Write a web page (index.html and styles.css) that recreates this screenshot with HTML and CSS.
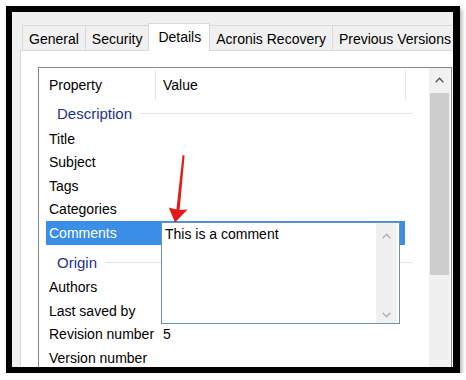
FILE: index.html
```html
<!DOCTYPE html>
<html lang="en">
<head>
  <meta charset="UTF-8" />
  <title>Properties - Details</title>
  <link rel="stylesheet" href="styles.css">
</head>
<body>
  <div class="frame">
    <div class="tabs">
      <div class="tab">General</div>
      <div class="tab">Security</div>
      <div class="tab active">Details</div>
      <div class="tab">Acronis Recovery</div>
      <div class="tab">Previous Versions</div>
    </div>
    <div class="panel">
      <div class="listview">
        <div class="lv-body">
          <div class="lv-header">
            <div class="col-prop">Property</div>
            <div class="col-value">Value</div>
          </div>
          <div class="group"><span>Description</span><i></i></div>
          <div class="row"><div class="prop">Title</div><div class="value"></div></div>
          <div class="row"><div class="prop">Subject</div><div class="value"></div></div>
          <div class="row"><div class="prop">Tags</div><div class="value"></div></div>
          <div class="row"><div class="prop">Categories</div><div class="value"></div></div>
          <div class="row selected"><div class="prop">Comments</div><div class="value"></div></div>
          <div class="group spaced"><span>Origin</span><i></i></div>
          <div class="row"><div class="prop">Authors</div><div class="value"></div></div>
          <div class="row"><div class="prop">Last saved by</div><div class="value"></div></div>
          <div class="row"><div class="prop">Revision number</div><div class="value">5</div></div>
          <div class="row"><div class="prop">Version number</div><div class="value"></div></div>
        </div>
        <div class="vscroll">
          <div class="sb-arrow">
            <svg width="9" height="6" viewBox="0 0 9 6"><path d="M0.7 5.2 L4.5 1.2 L8.3 5.2" fill="none" stroke="#555" stroke-width="1.4"/></svg>
          </div>
          <div class="thumb"></div>
        </div>
      </div>
    </div>

    <!-- in-place editor for the Comments value -->
    <div class="editor">
      <div class="editor-text">This is a comment</div>
      <div class="editor-scroll">
        <svg width="9" height="6" viewBox="0 0 9 6"><path d="M0.7 5.2 L4.5 1.2 L8.3 5.2" fill="none" stroke="#b0b0b0" stroke-width="1.3"/></svg>
        <svg width="9" height="6" viewBox="0 0 9 6"><path d="M0.7 0.8 L4.5 4.8 L8.3 0.8" fill="none" stroke="#b0b0b0" stroke-width="1.3"/></svg>
      </div>
    </div>

    <svg class="arrow" width="30" height="80" viewBox="0 0 30 80">
      <path d="M17.6 5 L19.6 5.6 L14.6 60 L22.5 59.5 L10 72.5 L3.8 57.5 L11.4 59.6 Z" fill="#e3191c"/>
    </svg>
  </div>
</body>
</html>
```

FILE: styles.css
```css
html, body {
  margin: 0;
  padding: 0;
  background: #ffffff;
  font-family: "Liberation Sans", Arial, sans-serif;
  font-size: 14px;
  color: #000;
}

.frame {
  position: relative;
  margin: 6px 0 0 6px;
  width: 441px;
  height: 355px;
  border: 6px solid #000;
  border-right-width: 7px;
  background: #f0f0f0;
  overflow: hidden;
  box-shadow: 2px 3px 4px rgba(0, 0, 0, 0.3);
}

/* tab strip */
.tabs {
  display: flex;
  align-items: flex-end;
  height: 38px;
  padding-left: 10px;
  box-sizing: border-box;
}

.tab {
  height: 25px;
  padding: 2px 6px 0;
  box-sizing: border-box;
  display: flex;
  align-items: center;
  border: 1px solid #d9d9d9;
  border-bottom: none;
  margin-right: -1px;
  background: #f0f0f0;
  white-space: nowrap;
}

.tab.active {
  position: relative;
  z-index: 1;
  height: 28px;
  padding: 0 8px 1px 9px;
  margin-bottom: -1px;
  background: #fff;
}

.panel {
  margin-left: 8px;
  width: 460px;
  height: 320px;
  padding: 16px 0 0 17px;
  box-sizing: border-box;
  background: #fff;
  border: 1px solid #d9d9d9;
}

/* list view */
.listview {
  display: flex;
  width: 414px;
  height: 320px;
  padding-right: 1px;
  box-sizing: border-box;
  border: 1px solid #828790;
  background: #fff;
}

.lv-body {
  width: 390px;
}

.lv-header {
  display: flex;
  height: 34px;
}

.col-prop,
.col-value {
  height: 30px;
  margin-top: 2px;
  display: flex;
  align-items: center;
  box-sizing: border-box;
  border-right: 1px solid #e5e5e5;
}

.col-prop {
  width: 117px;
  padding-left: 10px;
}

.col-value {
  width: 250px;
  padding-left: 7px;
}

.group {
  display: flex;
  align-items: center;
  height: 25px;
  padding: 0 16px 2px 18px;
  box-sizing: border-box;
  color: #1e3287;
  font-size: 15px;
}

.group.spaced {
  height: 31px;
  padding-top: 4px;
  padding-bottom: 0;
}

.group i {
  flex: 1;
  height: 1px;
  margin-left: 8px;
  background: #dde4ec;
}

.row {
  display: flex;
  align-items: center;
  height: 23.5px;
  margin-left: 7px;
  width: 359px;
}

.row .prop {
  width: 109px;
  padding-left: 3px;
  box-sizing: border-box;
  white-space: nowrap;
}

.row .value {
  padding-left: 8px;
}

.row.selected {
  background: #3a8ee6;
  color: #fff;
}

.vscroll {
  width: 21px;
  background: #f0f0f0;
  display: flex;
  flex-direction: column;
  align-items: center;
}

.sb-arrow {
  height: 25px;
  display: flex;
  align-items: center;
  padding-bottom: 1px;
  box-sizing: border-box;
}

.thumb {
  width: 19px;
  height: 182px;
  background: #cdcdcd;
}

/* overlays */
.editor {
  position: absolute;
  left: 149px;
  top: 210px;
  width: 239px;
  height: 102px;
  box-sizing: border-box;
  border: 1px solid #6a93b3;
  background: #fff;
  display: flex;
  padding-right: 2px;
}

.editor-text {
  flex: 1;
  padding: 3px 0 0 3px;
  line-height: 17px;
}

.editor-scroll {
  width: 21px;
  background: #f0f0f0;
  display: flex;
  flex-direction: column;
  justify-content: space-between;
  align-items: center;
  padding: 10px 0 5px;
  box-sizing: border-box;
}

.arrow {
  position: absolute;
  left: 153px;
  top: 138px;
}
```
